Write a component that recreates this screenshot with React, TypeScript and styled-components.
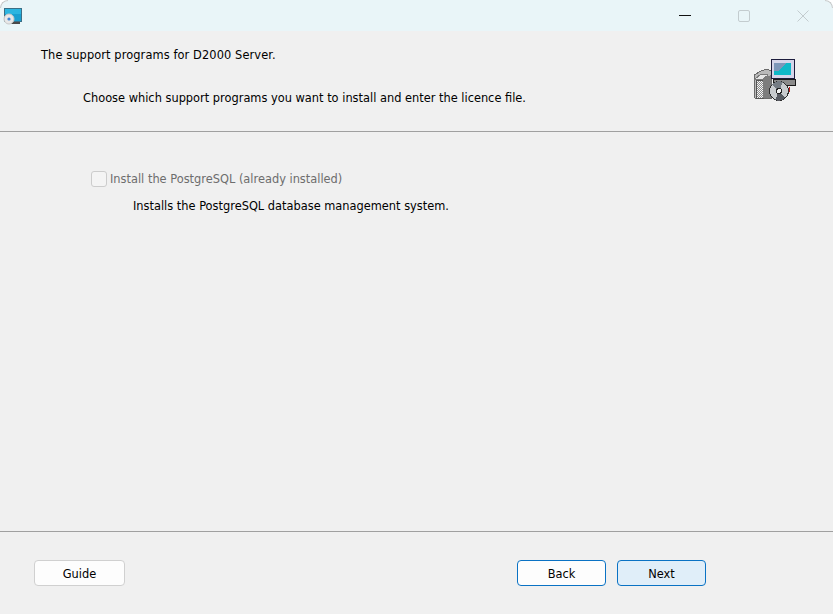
import styled, { createGlobalStyle } from "styled-components";

const GlobalStyle = createGlobalStyle`
  html, body {
    margin: 0;
    padding: 0;
    background: #ffffff;
  }
`;

const Window = styled.div`
  width: 833px;
  height: 614px;
  display: flex;
  flex-direction: column;
  background: #f0f0f0;
  border-radius: 8px 8px 0 0;
  overflow: hidden;
  font-family: "DejaVu Sans", sans-serif;
  font-size: 11.4px;
  color: #000000;
`;

const TitleBar = styled.div`
  position: relative;
  height: 31px;
  flex-shrink: 0;
  display: flex;
  align-items: center;
  justify-content: space-between;
  background: #e9f5f8;
  padding: 0 0 0 3px;
  box-sizing: border-box;

  &::before,
  &::after {
    content: "";
    position: absolute;
    top: 0;
    width: 8px;
    height: 8px;
    border-top: 1px solid #c8c8c8;
    box-sizing: border-box;
  }

  &::before {
    left: 0;
    border-left: 1px solid #c8c8c8;
    border-top-left-radius: 8px;
  }

  &::after {
    right: 0;
    border-right: 1px solid #c8c8c8;
    border-top-right-radius: 8px;
  }
`;

const WindowButtons = styled.div`
  display: flex;
  align-items: center;
  margin-right: 1px;
`;

const WindowButton = styled.div`
  width: 59px;
  height: 29px;
  display: flex;
  align-items: center;
  justify-content: center;
`;

const Header = styled.div`
  height: 101px;
  flex-shrink: 0;
  display: flex;
  justify-content: space-between;
  box-sizing: border-box;
  padding: 17px 36px 0 41px;
  border-bottom: 1px solid #a0a0a0;
`;

const HeaderText = styled.div`
  display: flex;
  flex-direction: column;
  gap: 28px;
  line-height: 15px;
`;

const Title = styled.div`
  letter-spacing: 0.1px;
`;

const SubTitle = styled.div`
  margin-left: 42px;
`;

const HeaderIcon = styled.div`
  margin-top: 10px;
`;

const Content = styled.div`
  flex: 1;
  box-sizing: border-box;
  padding: 39px 0 0 91px;
  border-bottom: 1px solid #a0a0a0;
`;

const OptionRow = styled.div`
  display: flex;
  align-items: center;
  gap: 3px;
  color: #6d6d6d;
  line-height: 16px;
`;

const CheckBox = styled.div`
  width: 16px;
  height: 16px;
  box-sizing: border-box;
  border: 1px solid #cccccc;
  border-radius: 3px;
  background: #f4f4f4;
`;

const OptionNote = styled.div`
  margin: 12px 0 0 42px;
  line-height: 15px;
`;

const Footer = styled.div`
  height: 82px;
  flex-shrink: 0;
  display: flex;
  align-items: flex-start;
  box-sizing: border-box;
  padding: 28px 127px 0 34px;
`;

const Button = styled.div<{ $tone?: "plain" | "focus" | "primary" }>`
  width: ${(p) => (p.$tone ? "89px" : "91px")};
  height: 26px;
  box-sizing: border-box;
  padding-top: 1px;
  display: flex;
  align-items: center;
  justify-content: center;
  border-radius: 4px;
  border: 1px solid ${(p) => (p.$tone ? "#0a72c4" : "#d0d0d0")};
  background: ${(p) => (p.$tone === "primary" ? "#e0eef9" : "#fdfdfd")};
`;

const Spacer = styled.div`
  flex: 1;
`;

const RightButtons = styled.div`
  display: flex;
  gap: 11px;
`;

const AppIcon = () => (
  <svg width="20" height="18" viewBox="0 0 20 18">
    <rect x="1.5" y="1.5" width="17" height="13" fill="#1a9fd0" stroke="#3b6f86" />
    <rect x="2" y="2" width="16" height="5" fill="#2bb5e0" />
    <rect x="8" y="15" width="9" height="2" fill="#4a4a4a" />
    <circle cx="6" cy="12" r="5" fill="#e8e8e8" stroke="#c6c6c6" />
    <circle cx="6" cy="12" r="1.6" fill="#3f87d6" />
  </svg>
);

const SetupIcon = () => (
  <svg width="44" height="44" viewBox="0 0 44 44" shapeRendering="crispEdges">
    <defs>
      <pattern id="dither" width="2" height="2" patternUnits="userSpaceOnUse">
        <rect width="2" height="2" fill="#f4f4f4" />
        <rect width="1" height="1" fill="#8a8a8a" />
        <rect x="1" y="1" width="1" height="1" fill="#8a8a8a" />
      </pattern>
    </defs>
    <path d="M1 17 L8 13 L14 11 L18 13 L18 40 L2 40 Z" fill="#b9b9b9" stroke="#6a6a6a" />
    <path d="M3 22 L10 22 L10 40 L3 40 Z" fill="url(#dither)" stroke="#555555" />
    <path d="M10 20 L18 17 L18 40 L10 40 Z" fill="#7c7c7c" />
    <path d="M2 21 L10 21 L15 17 L8 16 Z" fill="#e6e6e6" stroke="#7a7a7a" />
    <rect x="18" y="1.5" width="23" height="19" fill="#d5d5ea" stroke="#1c1c3c" />
    <rect x="21" y="5" width="17" height="12" fill="#0fb8c8" />
    <path d="M21 5 L33 5 L25 13 L21 13 Z" fill="#7d97ba" />
    <rect x="20" y="21" width="22" height="6" fill="#8c8c8c" stroke="#1a1a1a" />
    <circle cx="26" cy="33" r="9.5" fill="#c8cbce" stroke="#2e2e2e" />
    <path d="M26 33 L19 27 A9.5 9.5 0 0 1 30 24 Z" fill="#757c84" />
    <path d="M26 33 L32 40 A9.5 9.5 0 0 1 22 42 Z" fill="#585b62" />
    <circle cx="26" cy="33" r="2.5" fill="#f4f4f4" stroke="#222222" />
    <rect x="36" y="29" width="1" height="5" fill="#c02020" />
  </svg>
);

const App = () => (
  <>
    <GlobalStyle />
    <Window>
      <TitleBar>
        <AppIcon />
        <WindowButtons>
          <WindowButton>
            <svg width="12" height="2" viewBox="0 0 12 2">
              <path d="M0 0.5 H12" stroke="#111111" strokeWidth="1" />
            </svg>
          </WindowButton>
          <WindowButton>
            <svg width="12" height="12" viewBox="0 0 12 12">
              <rect x="0.5" y="0.5" width="11" height="11" rx="1.5" fill="none" stroke="#c3cccf" />
            </svg>
          </WindowButton>
          <WindowButton>
            <svg width="12" height="12" viewBox="0 0 12 12">
              <path d="M0.5 0.5 L11.5 11.5 M11.5 0.5 L0.5 11.5" stroke="#c3cccf" strokeWidth="1" />
            </svg>
          </WindowButton>
        </WindowButtons>
      </TitleBar>
      <Header>
        <HeaderText>
          <Title>The support programs for D2000 Server.</Title>
          <SubTitle>Choose which support programs you want to install and enter the licence file.</SubTitle>
        </HeaderText>
        <HeaderIcon>
          <SetupIcon />
        </HeaderIcon>
      </Header>
      <Content>
        <OptionRow>
          <CheckBox />
          Install the PostgreSQL (already installed)
        </OptionRow>
        <OptionNote>Installs the PostgreSQL database management system.</OptionNote>
      </Content>
      <Footer>
        <Button>Guide</Button>
        <Spacer />
        <RightButtons>
          <Button $tone="focus">Back</Button>
          <Button $tone="primary">Next</Button>
        </RightButtons>
      </Footer>
    </Window>
  </>
);

export default App;
